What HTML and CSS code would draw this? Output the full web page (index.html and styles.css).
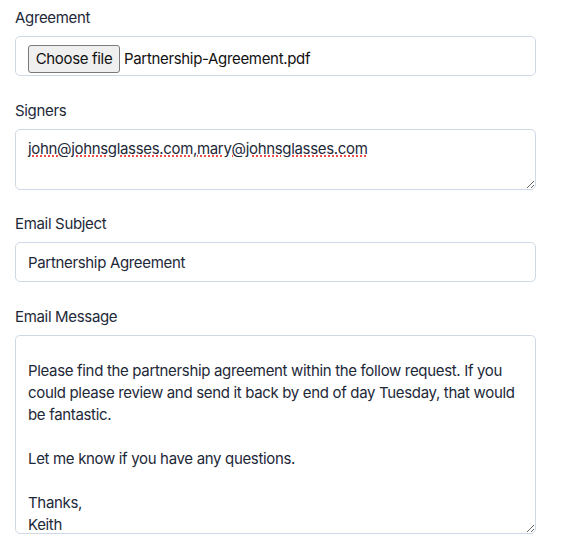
FILE: index.html
```html
<!DOCTYPE html>
<html lang="en">
<head>
<meta charset="utf-8">
<title>Send agreement</title>
<link rel="stylesheet" href="styles.css">
</head>
<body>
<form class="form">
  <div class="group">
    <label class="label">Agreement</label>
    <div class="control file-control">
      <span class="file-btn">Choose file</span>
      <span class="file-name">Partnership-Agreement.pdf</span>
    </div>
  </div>
  <div class="group">
    <label class="label" for="signers">Signers</label>
    <textarea id="signers" class="control area signers">john@johnsglasses.com,mary@johnsglasses.com</textarea>
  </div>
  <div class="group">
    <label class="label" for="subject">Email Subject</label>
    <input id="subject" class="control" type="text" value="Partnership Agreement">
  </div>
  <div class="group">
    <label class="label" for="message">Email Message</label>
    <textarea id="message" class="control area message">

Please find the partnership agreement within the follow request. If you
could please review and send it back by end of day Tuesday, that would
be fantastic.

Let me know if you have any questions.

Thanks,
Keith</textarea>
  </div>
</form>
</body>
</html>
```
FILE: styles.css
```css
html, body {
  margin: 0;
  padding: 0;
  background: #ffffff;
}

body {
  font-family: Inter, "Liberation Sans", sans-serif;
  font-size: 15px;
  line-height: 22px;
  letter-spacing: -0.33px;
  color: #1d2838;
}

.form {
  width: 521px;
  padding: 6px 0 0 15px;
}

.group {
  display: flex;
  flex-direction: column;
  margin-bottom: 22.5px;
}

.label {
  display: block;
  padding-top: 1px;
  margin-bottom: 7px;
  font-size: 15px;
  line-height: 22px;
}

.control {
  box-sizing: border-box;
  width: 521px;
  height: 40px;
  margin: 0;
  padding: 8px 12px;
  border: 1px solid #cfd9e5;
  border-radius: 5px;
  background: #fff;
  font-family: inherit;
  font-size: 15px;
  line-height: 22px;
  letter-spacing: -0.33px;
  color: #1d2838;
  outline: none;
}

.file-control {
  display: flex;
  align-items: center;
  padding: 8px 12px 2px;
}

.file-btn {
  box-sizing: border-box;
  height: 28px;
  width: 92px;
  display: flex;
  align-items: center;
  justify-content: center;
  border: 1px solid #7a7a7a;
  border-radius: 3px;
  background: #efefef;
  color: #111;
  font-size: 15px;
}

.file-name {
  margin-left: 4px;
  color: #111;
}

.area {
  display: block;
  resize: vertical;
}

.signers {
  height: 61px;
  text-decoration: underline dotted #ee4b4b;
  text-decoration-thickness: 2px;
  text-underline-offset: 2px;
}

.message {
  height: 199px;
  padding: 2px 12px 8px;
  overflow: hidden;
}
```
